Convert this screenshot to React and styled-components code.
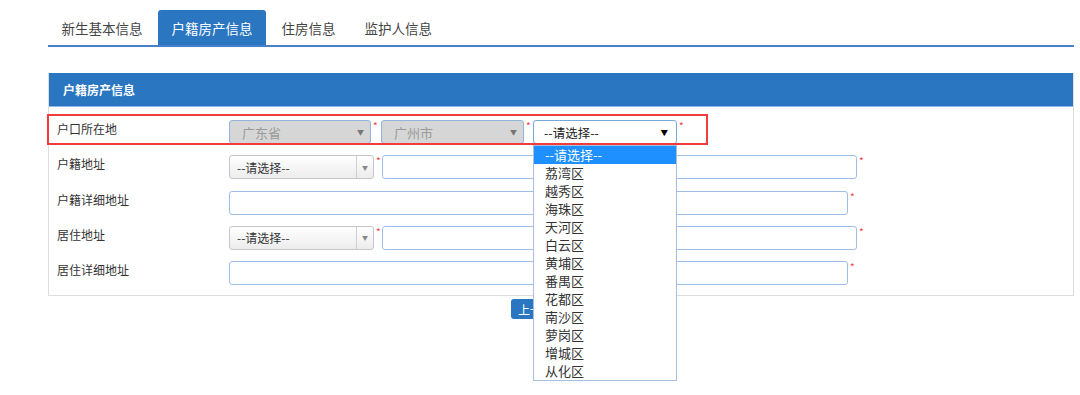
import React from 'react';
import styled, { createGlobalStyle } from 'styled-components';

const GlobalStyle = createGlobalStyle`
  body {
    margin: 0;
    background: #fff;
    font-family: "Noto Sans CJK SC", "Liberation Sans", sans-serif;
    color: #333;
  }
`;

const Page = styled.div`
  box-sizing: border-box;
  width: 1074px;
  min-height: 395px;
  padding: 10px 0 0 48px;
`;

const TabBar = styled.div`
  display: flex;
  gap: 2px;
  height: 35px;
  border-bottom: 2px solid #4a80c8;
`;

const Tab = styled.div`
  display: flex;
  align-items: center;
  padding: 0 13.5px;
  font-size: 13.5px;
  border-radius: 3px 3px 0 0;
  color: ${(p) => (p.$active ? '#fff' : '#444')};
  background: ${(p) => (p.$active ? '#2a76c1' : 'transparent')};
`;

const Panel = styled.div`
  margin-top: 26px;
  border: 1px solid #ddd;
  border-top: none;
`;

const PanelHeader = styled.div`
  height: 33px;
  display: flex;
  align-items: center;
  padding-left: 14px;
  background: #2a76c1;
  border-bottom: 1px solid #8fb8e6;
  color: #fff;
  font-size: 12px;
  font-weight: bold;
`;

const PanelBody = styled.div`
  padding: 13px 0 10px;
  display: flex;
  flex-direction: column;
  gap: 11.3px;
`;

const Row = styled.div`
  position: relative;
  display: flex;
  align-items: flex-start;
  height: 24px;
`;

const Highlight = styled.div`
  position: absolute;
  left: -2px;
  top: -6px;
  width: 657px;
  height: 27px;
  border: 2px solid #f03c3c;
  pointer-events: none;
  z-index: 2;
`;

const Label = styled.div`
  width: 172px;
  padding-left: 8px;
  font-size: 12px;
  line-height: 18px;
  color: #333;
`;

const Field = styled.div`
  display: flex;
  align-items: flex-start;
  position: relative;
`;

const Star = styled.span`
  box-sizing: border-box;
  width: ${(p) => p.$w || 10}px;
  padding-left: 2px;
  font-size: 10px;
  line-height: 12px;
  color: #f03c3c;
`;

const FixedSelect = styled.div`
  box-sizing: border-box;
  width: ${(p) => p.$w}px;
  height: 24px;
  display: flex;
  align-items: center;
  justify-content: space-between;
  padding: 0 ${(p) => (p.$open ? 8 : 6)}px 0 ${(p) => (p.$open ? 10 : 12)}px;
  border: 1px solid ${(p) => (p.$open ? '#7aa7d9' : '#93b4dc')};
  border-radius: 3px;
  background: ${(p) => (p.$open ? '#fff' : '#d6d6d6')};
  color: ${(p) => (p.$open ? '#222' : '#9a9a9a')};
  font-size: ${(p) => (p.$open ? 12.5 : 13)}px;
`;

const Arrow = styled.span`
  font-size: ${(p) => (p.$dark ? 7.5 : 7)}px;
  color: ${(p) => (p.$dark ? '#000' : '#777')};
`;

const ComboSelect = styled.div`
  box-sizing: border-box;
  width: 145px;
  height: 24px;
  display: flex;
  align-items: stretch;
  border: 1px solid #c6c6c6;
  border-radius: 3px;
  background: linear-gradient(#fff, #ececec);
  font-size: 12px;
  color: #333;
`;

const ComboText = styled.span`
  flex: 1;
  display: flex;
  align-items: center;
  padding-left: 7px;
`;

const ComboButton = styled.span`
  width: 16px;
  display: flex;
  align-items: center;
  justify-content: center;
  border-left: 1px solid #cfcfcf;
  font-size: 6px;
  color: #888;
`;

const TextInput = styled.div`
  box-sizing: border-box;
  width: ${(p) => p.$w}px;
  height: 24px;
  border: 1px solid #9dbfe6;
  border-radius: 3px;
  background: #fff;
`;

const DropList = styled.div`
  position: absolute;
  top: 25px;
  left: 0;
  width: 144px;
  box-sizing: border-box;
  border: 1px solid #a6bfdf;
  background: #fff;
  z-index: 5;
`;

const DropItem = styled.div`
  height: 18px;
  line-height: 18px;
  padding-left: 11px;
  font-size: 13px;
  color: ${(p) => (p.$sel ? '#fff' : '#333')};
  background: ${(p) => (p.$sel ? '#1e90ff' : '#fff')};
`;

const Actions = styled.div`
  display: flex;
  margin-top: 3px;
  padding-left: 463px;
`;

const Button = styled.div`
  height: 20px;
  padding: 0 7px;
  display: flex;
  align-items: center;
  border-radius: 3px;
  background: #2a76c1;
  color: #fff;
  font-size: 12px;
`;

const districts = [
  '--请选择--', '荔湾区', '越秀区', '海珠区', '天河区', '白云区', '黄埔区',
  '番禺区', '花都区', '南沙区', '萝岗区', '增城区', '从化区',
];

function Combo() {
  return (
    <ComboSelect>
      <ComboText>--请选择--</ComboText>
      <ComboButton>▼</ComboButton>
    </ComboSelect>
  );
}

export default function App() {
  return (
    <Page>
      <GlobalStyle />
      <TabBar>
        <Tab>新生基本信息</Tab>
        <Tab $active>户籍房产信息</Tab>
        <Tab>住房信息</Tab>
        <Tab>监护人信息</Tab>
      </TabBar>

      <Panel>
        <PanelHeader>户籍房产信息</PanelHeader>
        <PanelBody>
          <Row>
            <Highlight />
            <Label>户口所在地</Label>
            <Field>
              <FixedSelect $w={142}>广东省<Arrow>▼</Arrow></FixedSelect>
              <Star>*</Star>
            </Field>
            <Field>
              <FixedSelect $w={143}>广州市<Arrow>▼</Arrow></FixedSelect>
              <Star $w={9}>*</Star>
            </Field>
            <Field>
              <FixedSelect $w={144} $open>--请选择--<Arrow $dark>▼</Arrow></FixedSelect>
              <Star>*</Star>
              <DropList>
                {districts.map((d, i) => (
                  <DropItem key={d} $sel={i === 0}>{d}</DropItem>
                ))}
              </DropList>
            </Field>
          </Row>
          <Row>
            <Label>户籍地址</Label>
            <Field><Combo /><Star $w={8}>*</Star></Field>
            <Field><TextInput $w={475} /><Star>*</Star></Field>
          </Row>
          <Row>
            <Label>户籍详细地址</Label>
            <Field><TextInput $w={619} /><Star>*</Star></Field>
          </Row>
          <Row>
            <Label>居住地址</Label>
            <Field><Combo /><Star $w={8}>*</Star></Field>
            <Field><TextInput $w={475} /><Star>*</Star></Field>
          </Row>
          <Row>
            <Label>居住详细地址</Label>
            <Field><TextInput $w={619} /><Star>*</Star></Field>
          </Row>
        </PanelBody>
      </Panel>

      <Actions>
        <Button>上一步</Button>
      </Actions>
    </Page>
  );
}
